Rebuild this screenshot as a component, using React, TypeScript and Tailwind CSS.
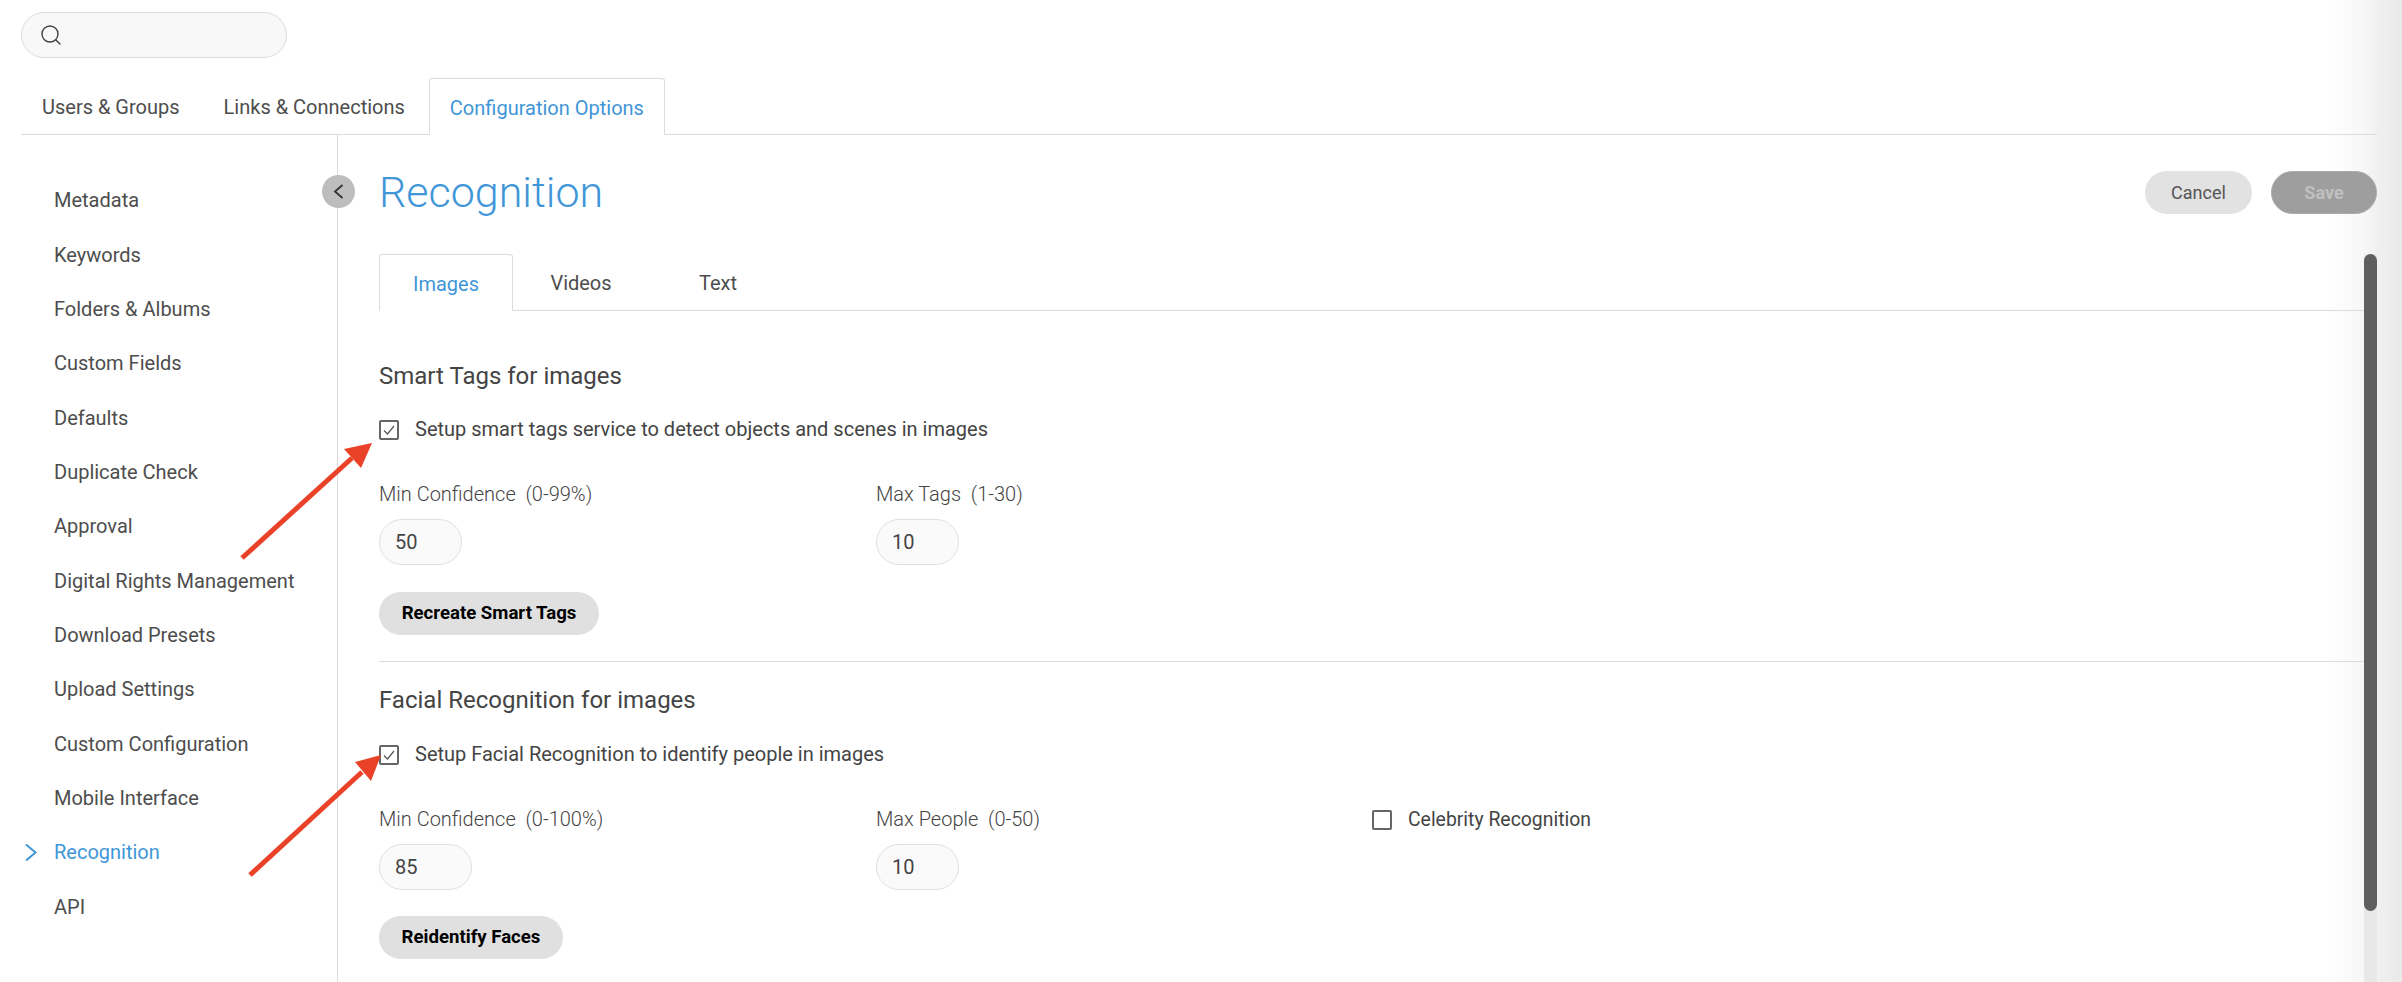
import React from 'react';
import { Search } from 'lucide-react';

const navItems = [
  'Metadata',
  'Keywords',
  'Folders & Albums',
  'Custom Fields',
  'Defaults',
  'Duplicate Check',
  'Approval',
  'Digital Rights Management',
  'Download Presets',
  'Upload Settings',
  'Custom Configuration',
  'Mobile Interface',
  'Recognition',
  'API',
];

const CheckBox: React.FC<{ checked?: boolean }> = ({ checked }) => (
  <span className="flex h-5 w-5 shrink-0 items-center justify-center rounded-[2px] border-2 border-[#666] bg-white">
    {checked && (
      <svg className="h-3.5 w-3.5 text-[#555]" viewBox="0 0 14 14" fill="none" stroke="currentColor" strokeWidth="1.2">
        <path d="M2 7.5 5.5 11 12 3" />
      </svg>
    )}
  </span>
);

const Field: React.FC<{ label: string; range: string; value: string; width: string }> = ({ label, range, value, width }) => (
  <div className="w-[497px]">
    <div className="h-[23px] text-[20px] leading-[23px] font-light whitespace-pre text-[#444]">
      {label}  {range}
    </div>
    <input
      readOnly
      defaultValue={value}
      className={`mt-[13px] block h-[46px] rounded-[23px] border border-[#e0e0e0] bg-[#fafafa] pl-[15px] text-[20px] text-[#444] outline-none ${width}`}
    />
  </div>
);

const Arrow: React.FC<{ points: string; x1: number; y1: number; x2: number; y2: number }> = ({ points, x1, y1, x2, y2 }) => (
  <svg className="absolute top-0 left-0" width="420" height="900" viewBox="0 0 420 900" fill="none">
    <line x1={x1} y1={y1} x2={x2} y2={y2} stroke="#ea4228" strokeWidth="5" />
    <polygon points={points} fill="#ea4228" />
  </svg>
);

const App: React.FC = () => {
  return (
    <div className="relative h-[982px] w-[2402px] overflow-hidden bg-[linear-gradient(90deg,#ffffff_0,#ffffff_2330px,#f7f7f7_2364px,#f0f0f0_2378px,#e9e9e9_2402px)] pr-[25px] pl-[21px] font-['Roboto',sans-serif] text-[#4d4d4d]">
      {/* Search */}
      <div className="flex h-[78px] items-start pt-[12px]">
        <div className="flex h-[46px] w-[266px] items-center rounded-[23px] border border-[#dcdcdc] bg-[#f8f8f8] pl-[17px]">
          <Search className="h-[24px] w-[24px] text-[#444]" strokeWidth={1.4} />
        </div>
      </div>

      {/* Top tabs */}
      <div className="flex h-[57px] items-stretch border-b border-[#dcdcdc] text-[20px]">
        <div className="flex items-center px-[21px] pt-px">Users &amp; Groups</div>
        <div className="ml-[2px] flex items-center px-[21px] pt-px">Links &amp; Connections</div>
        <div className="relative -mb-px ml-[3px] flex items-center rounded-t-[3px] border border-b-0 border-[#dcdcdc] bg-white px-[20px] pt-px text-[#3f96d8]">
          Configuration Options
        </div>
      </div>

      <div className="flex h-[848px]">
        {/* Sidebar */}
        <nav className="w-[316px] shrink-0 pt-[38px] text-[20px]">
          {navItems.map((item) => (
            <div key={item} className={`relative flex h-[54.35px] items-center pl-[33px] ${item === 'Recognition' ? 'text-[#3f96d8]' : ''}`}>
              {item === 'Recognition' && (
                <svg className="absolute left-[3px]" width="14" height="19" viewBox="0 0 14 19" fill="none" stroke="currentColor" strokeWidth="2">
                  <path d="M2 1.5 11.5 9.5 2 17.5" />
                </svg>
              )}
              {item}
            </div>
          ))}
        </nav>

        {/* Main */}
        <main className="relative min-w-0 flex-1 border-l border-[#dcdcdc]">
          <button className="absolute top-[40px] -left-[16px] flex h-[33px] w-[33px] items-center justify-center rounded-full bg-[#bdbdbd] text-[#333]">
            <svg width="11" height="15" viewBox="0 0 11 15" fill="none" stroke="currentColor" strokeWidth="1.8">
              <path d="M9.5 1 2 7.5 9.5 14" />
            </svg>
          </button>

          <div className="flex h-[119px] items-start justify-between pl-[41px]">
            <h1 className="mt-[27px] text-[43px] leading-[60px] font-light text-[#3f96d8]">Recognition</h1>
            <div className="mt-[36px] flex gap-[19px]">
              <button className="h-[43px] w-[107px] rounded-full bg-[#e2e2e2] text-[18px] text-[#555]">Cancel</button>
              <button className="h-[43px] w-[106px] rounded-full border border-[#aaa] bg-[#9e9e9e] text-[18px] font-bold text-[#c0c0c0]">Save</button>
            </div>
          </div>

          <div className="flex h-[729px]">
            <div className="min-w-0 flex-1 pl-[41px]">
              {/* Inner tabs */}
              <div className="flex h-[57px] items-stretch border-b border-[#dcdcdc] text-[20px]">
                <div className="relative -mb-px flex w-[134px] items-center justify-center rounded-t-[3px] border border-b-0 border-[#dcdcdc] bg-white pt-px text-[#3f96d8]">
                  Images
                </div>
                <div className="flex w-[136px] items-center justify-center pt-px">Videos</div>
                <div className="flex w-[138px] items-center justify-center pt-px">Text</div>
              </div>

              {/* Smart tags */}
              <h2 className="mt-[51px] h-[28px] text-[24px] leading-[28px] text-[#444]">Smart Tags for images</h2>
              <label className="mt-[26px] flex h-[28px] items-center gap-[16px] text-[20px] text-[#444]">
                <CheckBox checked />
                <span className="pb-[2px]">Setup smart tags service to detect objects and scenes in images</span>
              </label>
              <div className="mt-[39px] flex">
                <Field label="Min Confidence" range="(0-99%)" value="50" width="w-[83px]" />
                <Field label="Max Tags" range="(1-30)" value="10" width="w-[83px]" />
              </div>
              <button className="mt-[27px] block h-[43px] w-[220px] rounded-full bg-[#e0e0e0] text-[18.6px] font-bold text-black">
                Recreate Smart Tags
              </button>

              <div className="mt-[26px] border-t border-[#dcdcdc]" />

              {/* Facial recognition */}
              <h2 className="mt-[24px] h-[28px] text-[24px] leading-[28px] text-[#444]">Facial Recognition for images</h2>
              <label className="mt-[27px] flex h-[28px] items-center gap-[16px] text-[20px] text-[#444]">
                <CheckBox checked />
                <span className="pb-[3px]">Setup Facial Recognition to identify people in images</span>
              </label>
              <div className="mt-[39px] flex">
                <Field label="Min Confidence" range="(0-100%)" value="85" width="w-[93px]" />
                <Field label="Max People" range="(0-50)" value="10" width="w-[83px]" />
                <label className="-ml-px flex h-[23px] items-center gap-[16px] text-[19.4px] text-[#444]">
                  <CheckBox />
                  Celebrity Recognition
                </label>
              </div>
              <button className="mt-[26px] block h-[43px] w-[184px] rounded-full bg-[#e0e0e0] text-[18.6px] font-bold text-black">
                Reidentify Faces
              </button>
            </div>

            {/* Scrollbar */}
            <div className="w-[13px] shrink-0 bg-[#e8e8e8]">
              <div className="h-[657px] rounded-full bg-[#5f5f5f]" />
            </div>
          </div>
        </main>
      </div>

      {/* Annotation arrows */}
      <Arrow x1={242} y1={558} x2={352} y2={458} points="372,443 344,449 361,468" />
      <Arrow x1={250} y1={875} x2={362} y2={772} points="381,755 355,762 371,781" />
    </div>
  );
};

export default App;
